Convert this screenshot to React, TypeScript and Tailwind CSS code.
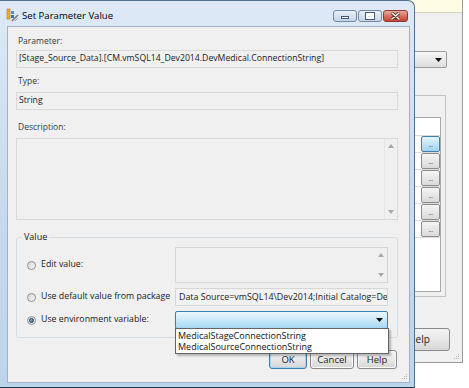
import React from "react";

const FONT = "font-['Open_Sans',sans-serif]";

function Radio({ checked }: { checked?: boolean }) {
  return (
    <span className="flex h-[9px] w-[9px] shrink-0 items-center justify-center rounded-full border border-[#8f9090] bg-gradient-to-br from-[#d4d4d4] to-[#fafafa]">
      {checked && (
        <span className="h-[5px] w-[5px] rounded-full border border-[#1d3e5c] bg-gradient-to-br from-[#9ad6f6] to-[#1f5f8f]" />
      )}
    </span>
  );
}

function ScrollArrows() {
  return (
    <div className="flex h-full w-[12px] flex-col items-center justify-between py-[5px]">
      <svg width="6" height="4" viewBox="0 0 6 4">
        <path d="M0 4 L3 0 L6 4 Z" fill="#a8a8a8" />
      </svg>
      <svg width="6" height="4" viewBox="0 0 6 4">
        <path d="M0 0 L3 4 L6 0 Z" fill="#a8a8a8" />
      </svg>
    </div>
  );
}

function Btn({ label, w, def }: { label: string; w: string; def?: boolean }) {
  return (
    <div
      className={`flex h-[19px] ${w} items-center justify-center rounded-[3px] border ${
        def ? "border-[#3c7fb1] shadow-[inset_0_0_0_1px_#a6d6f3]" : "border-[#8a8a8a] shadow-[inset_0_0_0_1px_#fbfbfb]"
      } bg-gradient-to-b from-[#f4f4f4] via-[#e8e8e8] to-[#d6d6d6] text-[9.5px] leading-none text-[#1a1a1a]`}
    >
      {label}
    </div>
  );
}

function Ellipsis({ active }: { active?: boolean }) {
  return (
    <div
      className={`flex h-[16px] w-[19px] items-center justify-center rounded-[2px] border ${
        active
          ? "border-[#3c7fb1] bg-gradient-to-b from-[#e6f5fd] to-[#9fd3f0]"
          : "border-[#8d8d8d] bg-gradient-to-b from-[#f5f5f5] to-[#dadada]"
      }`}
    >
      <span className="text-[7px] leading-none tracking-[-0.5px] text-[#555]">...</span>
    </div>
  );
}

function Grip({ color }: { color: string }) {
  const on = `h-[1px] w-[1px] ${color}`;
  const off = "h-[1px] w-[1px]";
  return (
    <div className="grid grid-cols-3 gap-[1px]">
      <span className={off} />
      <span className={off} />
      <span className={on} />
      <span className={off} />
      <span className={on} />
      <span className={on} />
      <span className={on} />
      <span className={on} />
      <span className={on} />
    </div>
  );
}

function BackgroundWindow() {
  return (
    <div className="absolute left-[300px] top-[-10px] flex h-[373px] w-[163px] flex-col border-b border-r border-[#9a9a9a] bg-[#f0f0f0]">
      <div className="h-[23px] shrink-0 border-b border-[#d4d2b8] bg-[#fefde3]" />
      <div className="ml-auto mr-[15px] mt-[38px] flex h-[17px] w-[120px] items-center justify-end rounded-[2px] border border-[#9c9c9c] bg-gradient-to-b from-[#f6f6f6] to-[#dedede] pr-[4px]">
        <svg width="7" height="4" viewBox="0 0 7 4">
          <path d="M0 0 L7 0 L3.5 4 Z" fill="#111" />
        </svg>
      </div>
      <div className="ml-auto mr-[16px] mt-[27px] flex h-[202px] w-[130px] flex-col border border-[#c4c4c4] pb-[4px] pr-[4px] pt-[21px]">
        <div className="flex flex-1 flex-col border border-[#a8a8a8] bg-white">
          <div className="h-[18px] border-b border-[#dcdcdc]" />
          {[0, 1, 2, 3, 4, 5].map((i) => (
            <div key={i} className="flex h-[17px] items-center justify-end border-b border-[#dcdcdc]">
              <Ellipsis active={i === 0} />
            </div>
          ))}
        </div>
      </div>
      <div className="ml-auto mr-[12px] mt-[31px] flex h-[23px] w-[62px] items-center justify-center rounded-[3px] border border-[#8a8a8a] bg-gradient-to-b from-[#f4f4f4] via-[#e8e8e8] to-[#d6d6d6] text-[10px] text-[#1a1a1a]">
        Help
      </div>
      <div className="mb-[3px] ml-auto mr-[3px] mt-auto">
        <Grip color="bg-[#b0b0b0]" />
      </div>
    </div>
  );
}

function TitleIcon() {
  return (
    <svg width="13" height="14" viewBox="0 0 13 14">
      <rect x="1" y="1" width="3" height="10" fill="#e8b52a" stroke="#b07d10" strokeWidth="0.6" />
      <rect x="5" y="3" width="3" height="3" fill="#5b8fd0" />
      <rect x="5" y="7" width="3" height="3" fill="#3f6fb5" />
      <path d="M6 13 L12 7" stroke="#7a7a7a" strokeWidth="1.6" />
      <path d="M9 13 L12 10" stroke="#a0a0a0" strokeWidth="1" />
    </svg>
  );
}

function CaptionButtons() {
  return (
    <div className="ml-auto mr-[6px] mt-[9px] flex gap-[1px]">
      <div className="flex h-[12px] w-[24px] items-end justify-center rounded-[3px] border border-[#7388a3] bg-gradient-to-b from-[#e9f0f8] to-[#c5d5e9] pb-[2px]">
        <span className="h-[3px] w-[8px] border border-[#4a5a70] bg-white" />
      </div>
      <div className="flex h-[12px] w-[24px] items-center justify-center rounded-[3px] border border-[#7388a3] bg-gradient-to-b from-[#e9f0f8] to-[#c5d5e9]">
        <span className="h-[6px] w-[8px] border-[2px] border-t-[3px] border-white outline outline-1 outline-[#4a5a70]" />
      </div>
      <div className="flex h-[12px] w-[25px] items-center justify-center rounded-[3px] border border-[#8b3b30] bg-gradient-to-b from-[#eaa99c] via-[#d8705f] to-[#c2422f]">
        <svg width="9" height="8" viewBox="0 0 9 8">
          <path d="M1 1 L8 7 M8 1 L1 7" stroke="#5a2018" strokeWidth="3" strokeLinecap="round" />
          <path d="M1 1 L8 7 M8 1 L1 7" stroke="#ffffff" strokeWidth="1.6" strokeLinecap="round" />
        </svg>
      </div>
    </div>
  );
}

function Dialog() {
  return (
    <div className="absolute left-0 top-0 flex h-[388px] w-[415px] flex-col rounded-tr-[7px] border-r border-t border-b border-[#52708c] border-b-[#1c3a48] bg-gradient-to-b from-[#dde9f6] via-[#c8dbef] to-[#bdd4ec]">
      <div className="flex h-[25px] shrink-0 items-start">
        <div className="ml-[6px] mt-[7px]">
          <TitleIcon />
        </div>
        <span className="ml-[3px] mt-[8px] text-[9.6px] leading-[13px] text-black">Set Parameter Value</span>
        <CaptionButtons />
      </div>
      <div className="mb-[4px] ml-[7px] mr-[4px] flex flex-1 flex-col border border-[#9fb4cc] bg-[#f0f0f0] pl-[8px] pr-[11px]">
        <div className="ml-[2px] mt-[8px] h-[12px] text-[8.5px] leading-[12px] text-[#3a3a3a]">Parameter:</div>
        <div className="mt-[3px] flex h-[18px] items-center overflow-hidden whitespace-nowrap border border-[#dadada] bg-[#f0f0f0] pl-[2px] text-[8.7px] text-[#1a1a1a]">
          [Stage_Source_Data].[CM.vmSQL14_Dev2014.DevMedical.ConnectionString]
        </div>
        <div className="ml-[2px] mt-[7px] h-[12px] text-[8.5px] leading-[12px] text-[#3a3a3a]">Type:</div>
        <div className="mt-[5px] flex h-[18px] items-center border border-[#dadada] bg-[#f0f0f0] pl-[2px] text-[8.7px] text-[#1a1a1a]">
          String
        </div>
        <div className="ml-[2px] mt-[11px] h-[12px] text-[8.5px] leading-[12px] text-[#3a3a3a]">Description:</div>
        <div className="mt-[5px] flex h-[82px] justify-end border border-[#dadada] bg-[#f0f0f0]">
          <div className="border-l border-[#e6e6e6]">
            <ScrollArrows />
          </div>
        </div>
        <div className="relative mt-[17px] flex h-[101px] flex-col gap-[5px] rounded-[3px] border border-[#d5dde3] pb-[8px] pl-[10px] pr-[9px] pt-[9px]">
          <span className="absolute left-[5px] top-[-7px] bg-[#f0f0f0] px-[2px] text-[9px] leading-[12px] text-[#1a1a1a]">Value</span>
          <div className="flex h-[36px] items-center">
            <div className="flex w-[148px] items-center gap-[5px]">
              <Radio />
              <span className="text-[8.8px] text-[#1a1a1a]">Edit value:</span>
            </div>
            <div className="flex h-full flex-1 justify-end border border-[#d6d6d6] bg-[#f0f0f0]">
              <ScrollArrows />
            </div>
          </div>
          <div className="flex h-[18px] items-center">
            <div className="flex w-[148px] items-center gap-[5px]">
              <Radio />
              <span className="whitespace-nowrap text-[8.8px] text-[#1a1a1a]">Use default value from package</span>
            </div>
            <div className="flex h-full min-w-0 flex-1 items-center overflow-hidden whitespace-nowrap border border-[#d6d6d6] bg-[#f2f2f2] pl-[3px] text-[8.9px] text-[#1a1a1a]">
              Data Source=vmSQL14\Dev2014;Initial Catalog=Dev
            </div>
          </div>
          <div className="flex h-[18px] items-center">
            <div className="flex w-[148px] items-center gap-[5px]">
              <Radio checked />
              <span className="text-[8.8px] text-[#1a1a1a]">Use environment variable:</span>
            </div>
            <div className="relative flex h-full flex-1 items-center justify-end rounded-[2px] border border-[#3c7fb1] bg-gradient-to-b from-[#ecf7fd] via-[#cbe9fa] to-[#a6d7f3] pr-[4px]">
              <svg width="7" height="4" viewBox="0 0 7 4">
                <path d="M0 0 L7 0 L3.5 4 Z" fill="#111" />
              </svg>
              <div className="absolute left-[-1px] right-[-2px] top-[16px] z-10 flex h-[26px] flex-col justify-center border border-[#646464] bg-white pl-[2px] text-[9px] leading-[11.5px] text-[#111] shadow-[2px_2px_2px_rgba(0,0,0,0.25)]">
                <span>MedicalStageConnectionString</span>
                <span>MedicalSourceConnectionString</span>
              </div>
            </div>
          </div>
        </div>
        <div className="mr-[1px] mt-[12px] flex justify-end gap-[3px]">
          <Btn label="OK" w="w-[38px]" def />
          <Btn label="Cancel" w="w-[44px]" />
          <Btn label="Help" w="w-[40px]" />
        </div>
        <div className="mb-[3px] ml-auto mr-[-9px] mt-auto">
          <Grip color="bg-[#b8b8b8]" />
        </div>
      </div>
    </div>
  );
}

export default function App() {
  return (
    <div className={`relative h-[388px] w-[469px] overflow-hidden bg-white ${FONT}`}>
      <BackgroundWindow />
      <Dialog />
    </div>
  );
}
